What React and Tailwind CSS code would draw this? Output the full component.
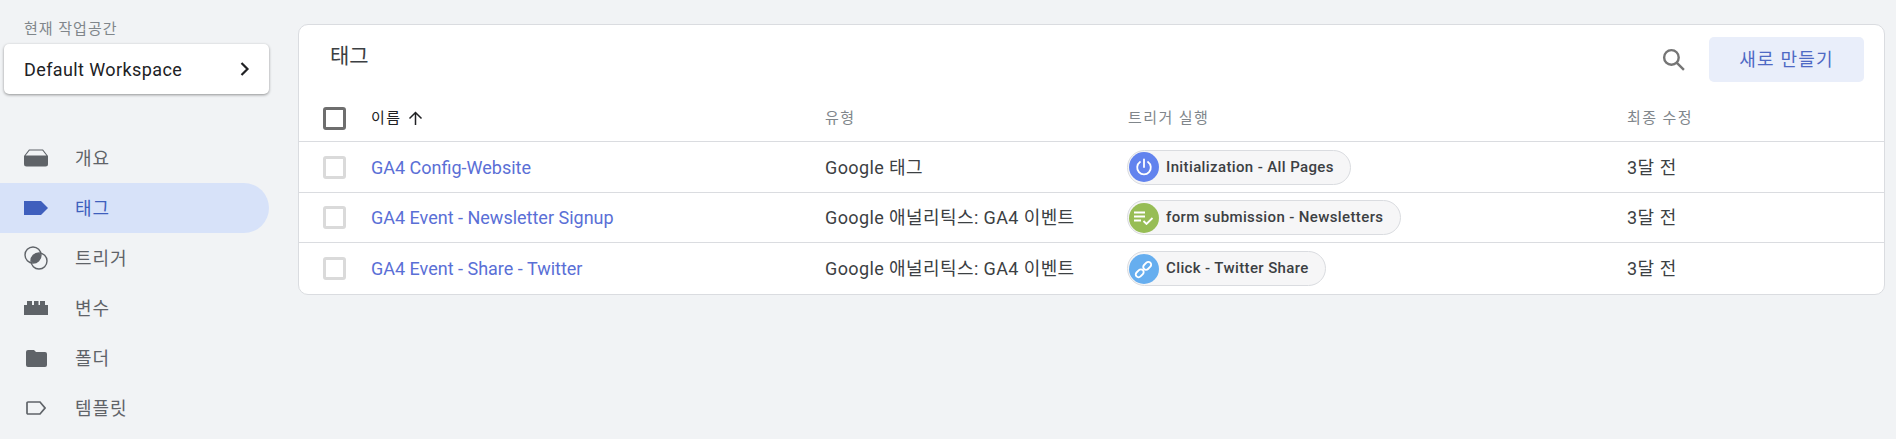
import React from 'react';

const font = { fontFamily: 'Roboto, "Noto Sans CJK KR", sans-serif' };

const OverviewIcon = () => (
    <svg width="24" height="18" viewBox="0 0 24 18">
        <path d="M0 7 L5 0.5 H19 L24 7 V15 A2.5 2.5 0 0 1 21.5 17.5 H2.500 A2.500 2.500 0 0 1 0 15 Z" fill="#5f6368" />
        <path d="M1.6 6.5 L5.6 1.5 H18.4 L22.4 6.5 Z" fill="#f1f3f5" />
    </svg>
);
const TagIcon = ({ color = '#3f5fbd' }) => (
    <svg width="24" height="14" viewBox="0 0 24 14"><path d="M0 0 H17 L24 7 L17 14 H0 Z" fill={color} /></svg>
);
const TriggerIcon = () => (
    <svg width="24" height="24" viewBox="0 0 24 24" fill="none">
        <circle cx="9" cy="9" r="8" stroke="#5f6368" strokeWidth="1.4" />
        <circle cx="15" cy="15" r="8" stroke="#5f6368" strokeWidth="1.4" />
        <path d="M15 7 A8 8 0 0 1 17 9 A8 8 0 0 1 9 17 A8 8 0 0 1 7 15 A8 8 0 0 1 15 7 Z" fill="#5f6368" />
    </svg>
);
const VariableIcon = () => (
    <svg width="24" height="14" viewBox="0 0 24 14"><path d="M0 4 H3 V0 H8 V4 H10 V0 H14.500 V4 H16 V0 H21 V4 H24 V14 H0 Z" fill="#5f6368" /></svg>
);
const FolderIcon = () => (
    <svg width="21" height="17" viewBox="0 0 21 17"><path d="M2 0 H8 L10 2 H19 A2 2 0 0 1 21 4 V15 A2 2 0 0 1 19 17 H2 A2 2 0 0 1 0 15 V2 A2 2 0 0 1 2 0 Z" fill="#5f6368" /></svg>
);
const TemplateIcon = () => (
    <svg width="20" height="14" viewBox="0 0 20 14" fill="none"><path d="M2 1 H14 L19 7 L14 13 H2 A1 1 0 0 1 1 12 V2 A1 1 0 0 1 2 1 Z" stroke="#5f6368" strokeWidth="1.7" /></svg>
);

const PowerIcon = () => (
    <svg width="18" height="18" viewBox="0 0 18 18" fill="none" stroke="#fff" strokeWidth="1.8" strokeLinecap="round">
        <path d="M9 1.500 V9" />
        <path d="M5 4 A6.800 6.800 0 1 0 13 4" />
    </svg>
);
const FormIcon = () => (
    <svg width="20" height="14" viewBox="0 0 20 14" fill="none" stroke="#fff" strokeWidth="1.8">
        <path d="M0 1.500 H11 M0 5.500 H11 M0 9.500 H7" />
        <path d="M9.500 10 L12.500 13 L18.500 7" />
    </svg>
);
const LinkIcon = () => (
    <svg width="20" height="20" viewBox="0 0 18 18" fill="none" stroke="#fff" strokeWidth="1.7">
        <rect x="-5.500" y="-2.500" width="8" height="5" rx="2.500" transform="translate(6.200 11.800) rotate(-45)" />
        <rect x="-2.500" y="-2.500" width="8" height="5" rx="2.500" transform="translate(10.800 7.200) rotate(-45)" />
    </svg>
);

const navItems = [
    { label: '개요', icon: <OverviewIcon /> },
    { label: '태그', icon: <TagIcon />, active: true },
    { label: '트리거', icon: <TriggerIcon /> },
    { label: '변수', icon: <VariableIcon /> },
    { label: '폴더', icon: <FolderIcon /> },
    { label: '템플릿', icon: <TemplateIcon /> },
];

const rows = [
    { name: 'GA4 Config-Website', type: 'Google 태그', trigger: 'Initialization - All Pages', bg: 'bg-[#6283ee]', icon: <PowerIcon />, chip: 'w-[224px]', height: 'h-[51px]' },
    { name: 'GA4 Event - Newsletter Signup', type: 'Google 애널리틱스: GA4 이벤트', trigger: 'form submission - Newsletters', bg: 'bg-[#97bd55]', icon: <FormIcon />, chip: 'w-[274px]', height: 'h-[50px]' },
    { name: 'GA4 Event - Share - Twitter', type: 'Google 애널리틱스: GA4 이벤트', trigger: 'Click - Twitter Share', bg: 'bg-[#66aeef]', icon: <LinkIcon />, chip: 'w-[199px]', height: 'h-[51px]' },
];

const rowGrid = 'grid grid-cols-[72px_454px_302px_500px_1fr] items-center';

const App = () => {
    return (
        <div className="flex h-[439px] w-[1896px] overflow-hidden bg-[#f1f3f5]" style={font}>
            {/* Sidebar */}
            <aside className="w-[298px] shrink-0">
                <div className="pl-[24px] pt-[20px] text-[15px] leading-[18px] tracking-[1px] text-[#80868b]">현재 작업공간</div>
                <div className="ml-[4px] mt-[6px] flex h-[50px] w-[265px] items-center justify-between rounded-[5px] bg-white pl-[20px] pr-[18px] shadow-[0_1px_3px_rgba(0,0,0,0.4)]">
                    <span className="text-[18px] tracking-[0.4px] text-[#202124]">Default Workspace</span>
                    <svg width="12" height="16" viewBox="0 0 12 16" fill="none" stroke="#202124" strokeWidth="2.200"><path d="M2.500 2 L8.500 8 L2.500 14" /></svg>
                </div>
                <nav className="mt-[39px] w-[269px]">
                    {navItems.map((item) => (
                        <div key={item.label} className={`flex h-[50px] items-center rounded-r-[25px] ${item.active ? 'bg-[#d7e2f9] text-[#3f5fbd]' : 'text-[#5f6368]'}`}>
                            <span className="flex w-[72px] justify-center">{item.icon}</span>
                            <span className="ml-[3px] text-[18px] tracking-[1px]">{item.label}</span>
                        </div>
                    ))}
                </nav>
            </aside>

            {/* Tags card */}
            <main className="pt-[24px]">
                <div className="h-[271px] w-[1587px] rounded-[10px] border border-[#dadce0] bg-white">
                    <div className="flex h-[47px] items-start justify-between">
                        <h1 className="pl-[31px] pt-[18px] text-[21px] font-normal leading-[26px] text-[#3c4043]">태그</h1>
                        <div className="flex items-center pr-[20px] pt-[12px]">
                            <svg className="mr-[23px]" width="25" height="25" viewBox="0 0 24 24" fill="none" stroke="#757575" strokeWidth="2.300">
                                <circle cx="10" cy="10" r="7" />
                                <path d="M15 15 L22 22" />
                            </svg>
                            <button className="h-[45px] w-[155px] rounded-[5px] bg-[#e9eefa] text-[18px] tracking-[1.2px] text-[#4e69c4]">새로 만들기</button>
                        </div>
                    </div>
                    <div className={`${rowGrid} h-[70px] border-b border-[#dadce0] pt-[24px] text-[15px] tracking-[1.4px] text-[#80868b]`}>
                        <span className="pl-[24px]"><span className="block h-[23px] w-[23px] rounded-[3px] border-[3px] border-[#6e6e6e]" /></span>
                        <span className="flex items-center text-[#202124]">
                            <span>이름</span>
                            <svg className="ml-[7px]" width="15" height="15" viewBox="0 0 15 15" fill="none" stroke="#202124" strokeWidth="1.500"><path d="M7.500 14 V2 M1.500 7.500 L7.500 1.500 L13.500 7.500" /></svg>
                        </span>
                        <span>유형</span>
                        <span className="pl-[1px]">트리거 실행</span>
                        <span>최종 수정</span>
                    </div>
                    {rows.map((row, i) => (
                        <div key={row.name} className={`${rowGrid} ${row.height} text-[18px] ${i < 2 ? 'border-b border-[#dadce0]' : ''}`}>
                            <span className="pl-[24px]"><span className="block h-[23px] w-[23px] rounded-[3px] border-[3px] border-[#dadada]" /></span>
                            <span className="text-[#5a6fd6]">{row.name}</span>
                            <span className="tracking-[0.4px] text-[#3c4043]">{row.type}</span>
                            <span>
                                <span className={`flex h-[35px] items-center rounded-full border-[1.5px] border-[#dadce0] bg-[#f6f6f7] pl-[1px] ${row.chip}`}>
                                    <span className={`flex h-[30px] w-[30px] shrink-0 items-center justify-center rounded-full ${row.bg}`}>{row.icon}</span>
                                    <span className="ml-[7px] whitespace-nowrap text-[15px] font-medium tracking-[0.38px] text-[#3c4043]">{row.trigger}</span>
                                </span>
                            </span>
                            <span className="tracking-[0.5px] text-[#3c4043]">3달 전</span>
                        </div>
                    ))}
                </div>
            </main>
        </div>
    );
};

export default App;
